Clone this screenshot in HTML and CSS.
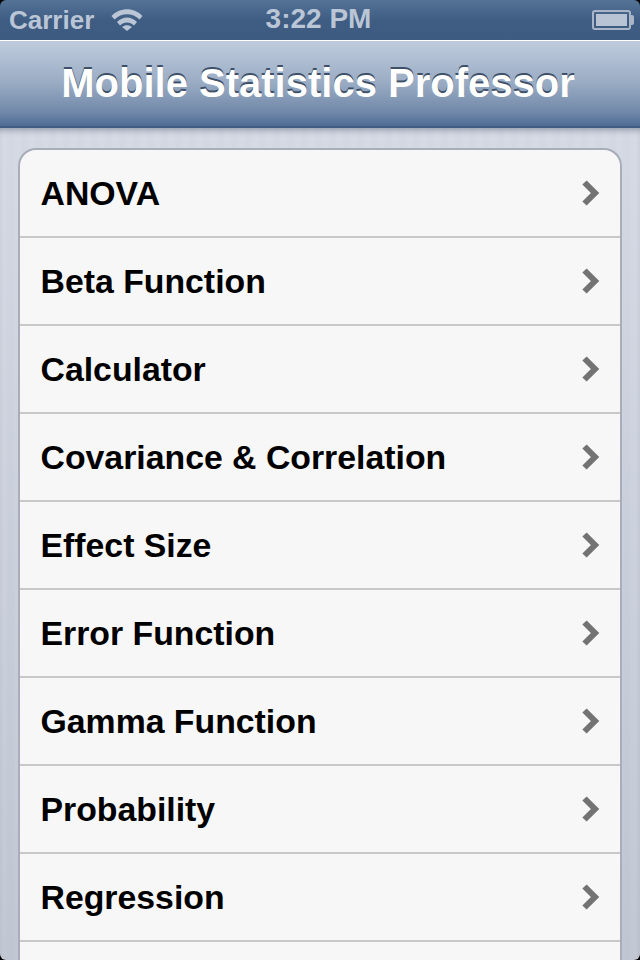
FILE: index.html
```html
<!DOCTYPE html>
<html lang="en">
<head>
<meta charset="UTF-8">
<title>Mobile Statistics Professor</title>
<link rel="stylesheet" href="styles.css">
</head>
<body>
<div class="status">
	<div class="status-left">
		<span>Carrier</span>
		<svg class="wifi" width="32" height="24" viewBox="0 0 32 24">
			<path d="M0.500 9C8.500 0 23.500 0 31.500 9L28.500 12.500C21.500 5.500 10.500 5.500 3.500 12.500Z"/>
			<path d="M6 15C12 9 20 9 26 15L23 18.500C19 14.500 13 14.500 9 18.500Z"/>
			<path d="M11 20C14 17.500 18 17.500 21 20L16 24Z"/>
		</svg>
	</div>
	<div class="status-time">3:22 PM</div>
	<div class="battery"><div class="battery-fill"></div></div>
</div>
<div class="navbar">Mobile Statistics Professor</div>
<div class="content">
	<ul class="list">
		<li class="row"><span>ANOVA</span><svg class="chev" width="20" height="26" viewBox="0 0 20 26"><path d="M3.500 2.500L14 13L3.500 23.500"/></svg></li>
		<li class="row"><span>Beta Function</span><svg class="chev" width="20" height="26" viewBox="0 0 20 26"><path d="M3.500 2.500L14 13L3.500 23.500"/></svg></li>
		<li class="row"><span>Calculator</span><svg class="chev" width="20" height="26" viewBox="0 0 20 26"><path d="M3.500 2.500L14 13L3.500 23.500"/></svg></li>
		<li class="row"><span>Covariance &amp; Correlation</span><svg class="chev" width="20" height="26" viewBox="0 0 20 26"><path d="M3.500 2.500L14 13L3.500 23.500"/></svg></li>
		<li class="row"><span>Effect Size</span><svg class="chev" width="20" height="26" viewBox="0 0 20 26"><path d="M3.500 2.500L14 13L3.500 23.500"/></svg></li>
		<li class="row"><span>Error Function</span><svg class="chev" width="20" height="26" viewBox="0 0 20 26"><path d="M3.500 2.500L14 13L3.500 23.500"/></svg></li>
		<li class="row"><span>Gamma Function</span><svg class="chev" width="20" height="26" viewBox="0 0 20 26"><path d="M3.500 2.500L14 13L3.500 23.500"/></svg></li>
		<li class="row"><span>Probability</span><svg class="chev" width="20" height="26" viewBox="0 0 20 26"><path d="M3.500 2.500L14 13L3.500 23.500"/></svg></li>
		<li class="row"><span>Regression</span><svg class="chev" width="20" height="26" viewBox="0 0 20 26"><path d="M3.500 2.500L14 13L3.500 23.500"/></svg></li>
		<li class="row"></li>
	</ul>
</div>
</body>
</html>
```

FILE: styles.css
```css
* { padding: 0; margin: 0; box-sizing: border-box; }
html, body { height: 100%; overflow: hidden; }
body { width: 640px; height: 960px; font-family: "Liberation Sans", Arial, sans-serif; display: flex; flex-direction: column; background: #d0d5e0; position: relative; }
body::after { content: ""; position: absolute; top: 0; left: 0; right: 0; bottom: 0; border-radius: 6px; box-shadow: 0 0 0 8px #000; pointer-events: none; }

.status { height: 40px; flex: none; display: flex; align-items: center; justify-content: space-between; padding: 0 6px 0 9px; position: relative; background: linear-gradient(#557397, #3f5c83 50%, #3d5a81); color: #bac5d5; font-size: 26px; font-weight: bold; }
.status-left { display: flex; align-items: center; gap: 17px; }
.wifi { fill: #bac5d5; margin-bottom: 2px; }
.status-time { position: absolute; left: 0; right: 3px; top: 3px; text-align: center; font-size: 28px; }
.battery { width: 39px; height: 20px; border: 2px solid #aab6c8; border-radius: 3px; padding: 2px; position: relative; margin-right: 3px; }
.battery-fill { height: 100%; background: #b8c3d3; }
.battery::after { content: ""; position: absolute; right: -5px; top: 3px; width: 3px; height: 10px; background: #aab6c8; border-radius: 0 2px 2px 0; }

.navbar { height: 88px; flex: none; display: flex; align-items: center; justify-content: center; border-top: 1px solid #fff; border-bottom: 2px solid #3f5b82; background: linear-gradient(#bfccdd, #99abc3 50%, #6f87a8 85%, #4e6c94); color: #fff; font-size: 40px; font-weight: bold; text-shadow: 0 -2px 0 #3e4f68; padding: 0 4px 0 0; }

.content { flex: 1; overflow: hidden; padding: 20px 18px 0; background-image: repeating-linear-gradient(90deg, rgba(255,255,255,0.05) 0 7px, transparent 7px 14px), linear-gradient(#d3d8e3, #bfc5d1); box-shadow: inset 0 6px 6px -4px rgba(60,70,90,0.45); }
.list { list-style: none; background: #f7f7f7; border: 2px solid #a9adb9; border-radius: 18px 18px 0 0; border-bottom: 0; }
.row { height: 88px; display: flex; align-items: center; justify-content: space-between; padding: 0 19px 0 20.5px; border-bottom: 2px solid #c8c8c8; color: #000; font-size: 33.8px; font-weight: bold; }
.chev { fill: none; stroke: #737373; stroke-width: 6; }
```
